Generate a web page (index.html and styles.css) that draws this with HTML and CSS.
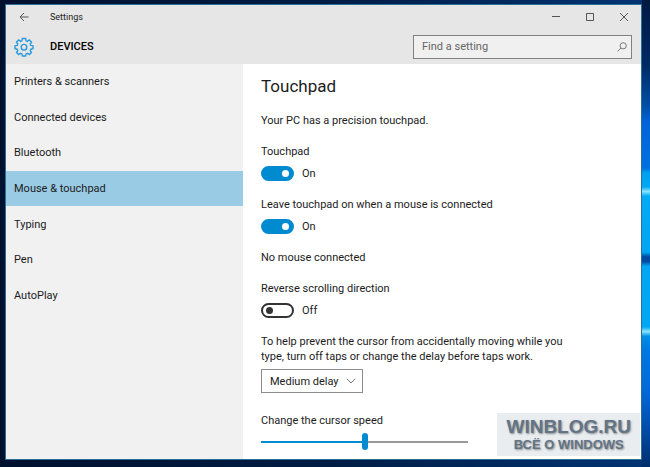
FILE: index.html
```
<!DOCTYPE html>
<html lang="en">

<head>
  <meta charset="UTF-8" />
  <meta name="viewport" content="width=device-width, initial-scale=1.0" />
  <title>Settings</title>
  <link rel="stylesheet" href="styles.css">
</head>

<body>
  <div class="window">
    <header>
      <div class="titlebar">
        <button class="back" aria-label="Back">
          <svg width="10" height="10" viewBox="0 0 10 10"><path d="M9.5 5H1M5 1L1 5l4 4" /></svg>
        </button>
        <span class="app-name">Settings</span>
        <button class="win-btn" aria-label="Minimize">
          <svg width="10" height="10" viewBox="0 0 10 10"><path d="M1 4.5h8" /></svg>
        </button>
        <button class="win-btn" aria-label="Maximize">
          <svg width="10" height="10" viewBox="0 0 10 10"><path d="M1.5 1.5h7v7h-7z" /></svg>
        </button>
        <button class="win-btn" aria-label="Close">
          <svg width="10" height="10" viewBox="0 0 10 10"><path d="M1 1l8 8M9 1L1 9" /></svg>
        </button>
      </div>
      <div class="toolbar">
        <svg class="gear" width="20" height="20" viewBox="0 0 20 20">
          <path d="M8.3 1.5h3.4l.4 2.3 1.3.6 2-1.4 2.1 2.1-1.3 2 .6 1.3 2.2.4v2.8l-2.2.6-.6 1.4 1.3 1.9-2.1 2.1-2-1.3-1.3.6-.5 2.1H8.4l-.5-2.1-1.3-.6-2 1.3-2.1-2.1 1.3-1.9-.6-1.4L1 11.6V8.8l2.2-.4.6-1.3-1.3-2L4.6 3l2 1.4 1.3-.6z" />
          <circle cx="10" cy="10.2" r="2.8" />
        </svg>
        <h2>DEVICES</h2>
        <div class="search">
          <input type="text" placeholder="Find a setting" aria-label="Find a setting">
          <svg width="10" height="10" viewBox="0 0 10 10"><circle cx="6.2" cy="3.8" r="3.1" /><path d="M4 6L.6 9.4" /></svg>
        </div>
      </div>
    </header>

    <div class="content">
      <nav>
        <div class="nav-list">
          <a href="#">Printers &amp; scanners</a>
          <a href="#">Connected devices</a>
          <a href="#">Bluetooth</a>
          <a href="#" class="active">Mouse &amp; touchpad</a>
          <a href="#">Typing</a>
          <a href="#">Pen</a>
          <a href="#">AutoPlay</a>
        </div>
      </nav>

      <main>
        <h1>Touchpad</h1>
        <p>Your PC has a precision touchpad.</p>

        <div class="setting">
          <label for="touchpad">Touchpad</label>
          <div class="switch-row">
            <input type="checkbox" class="switch" id="touchpad" checked>
            <span>On</span>
          </div>
        </div>

        <div class="setting">
          <label for="leaveOn">Leave touchpad on when a mouse is connected</label>
          <div class="switch-row">
            <input type="checkbox" class="switch" id="leaveOn" checked>
            <span>On</span>
          </div>
        </div>

        <p>No mouse connected</p>

        <div class="setting">
          <label for="reverse">Reverse scrolling direction</label>
          <div class="switch-row">
            <input type="checkbox" class="switch" id="reverse">
            <span>Off</span>
          </div>
        </div>

        <div class="setting">
          <label for="delay" class="help">To help prevent the cursor from accidentally moving while you type, turn off taps or change the delay before taps work.</label>
          <div class="dropdown">
            <select id="delay">
              <option>No delay</option>
              <option>Short delay</option>
              <option selected>Medium delay</option>
              <option>Long delay</option>
            </select>
            <svg width="10" height="6" viewBox="0 0 10 6"><path d="M.8.8L5 5 9.2.8" /></svg>
          </div>
        </div>

        <div class="setting speed">
          <label for="speed">Change the cursor speed</label>
          <input type="range" id="speed" min="0" max="100" value="50">
        </div>
      </main>
    </div>

    <div class="watermark">
      <strong>WINBLOG.RU</strong>
      <span>ВСЁ О WINDOWS</span>
    </div>
  </div>
</body>

</html>
```
FILE: styles.css
```
:root {
  --accent: #008bd1;
  --bar: #e6e6e6;
  --side: #f1f1f1;
  --selected: #9acbe4;
  --text: #1c1c1c;
  --line: #8c8c8c;
}

* {
  box-sizing: border-box;
}

/* desktop wallpaper, the bright part shows on the right */
body {
  margin: 0;
  padding: 4px 8px 7px 5px;
  font-family: Roboto, 'Segoe UI', sans-serif;
  font-size: 11px;
  line-height: 15px;
  color: var(--text);
  background:
    linear-gradient(#001a40 0%, #002a66 14%, #0050a8 23%, #0064d8 26%, #0070e0 36%,
      #00a0ee 37%, #00a8f4 40%, #8ae4fa 41%, #00aaf4 42%, #00a6f2 54%, #004aa2 55%, #004aa2 56%,
      #00a6f2 57%, #00a8f4 70%, #8ae4fa 71%, #0090e8 72%, #0078e0 75%, #0068d8 84%, #0048a0 93%, #002e6a 100%) right / 8px 100% no-repeat,
    linear-gradient(90deg, #00102e, #001c44 50%, #003474);
}

.window {
  position: relative;
  display: flex;
  flex-direction: column;
  min-height: calc(100vh - 11px);
  background: #fff;
  border: 1px solid #2a6f98;
}

header {
  background: var(--bar);
}

svg {
  display: block;
  fill: none;
  stroke: #555;
}

button {
  display: flex;
  align-items: center;
  justify-content: center;
  height: 24px;
  padding: 0;
  border: none;
  background: none;
}

.titlebar {
  display: flex;
  align-items: center;
}

.back {
  width: 36px;
}

.app-name {
  flex: 1;
  padding-left: 8px;
  font-size: 9px;
}

.win-btn {
  width: 34px;
}

.toolbar {
  display: flex;
  align-items: center;
  height: 35px;
  padding: 0 9px 0 8px;
}

.gear {
  stroke: #2a9bdc;
  stroke-width: 1.4;
}

h2 {
  flex: 1;
  margin: 0 0 0 16px;
  font-size: 11px;
  font-weight: 500;
  color: #000;
}

.search {
  position: relative;
  width: 36%;
  max-width: 219px;
}

.search input {
  display: block;
  width: 100%;
  height: 24px;
  padding: 0 24px 0 8px;
  border: 1px solid #808080;
  border-radius: 0;
  background: #f0f0f0;
  font: inherit;
}

.search input::placeholder {
  color: #666;
}

.search svg {
  position: absolute;
  right: 5px;
  top: 7px;
  stroke: #777;
}

.content {
  flex: 1;
  display: flex;
}

nav {
  width: 237px;
  background: var(--side);
}

.nav-list {
  display: grid;
  grid-auto-rows: 1fr;
  height: 249px;
}

.nav-list a {
  display: flex;
  align-items: center;
  padding-left: 8px;
  color: var(--text);
  text-decoration: none;
}

.nav-list .active {
  background: var(--selected);
}

main {
  flex: 1;
  display: flex;
  flex-direction: column;
  gap: 16px;
  padding: 11px 18px 8px;
}

h1 {
  margin: 0;
  font-size: 17px;
  font-weight: 400;
  line-height: 22px;
}

p {
  margin: 0;
}

.setting label {
  display: block;
}

.switch-row {
  display: flex;
  align-items: center;
  gap: 8px;
  margin-top: 7px;
}

.switch {
  appearance: none;
  display: flex;
  align-items: center;
  width: 33px;
  height: 15px;
  margin: 0;
  padding: 0 3px;
  border: 2px solid #333;
  border-radius: 8px;
  background: #fff;
}

.switch::before {
  content: "";
  width: 7px;
  height: 7px;
  border-radius: 50%;
  background: #333;
}

.switch:checked {
  justify-content: flex-end;
  border-color: var(--accent);
  background: var(--accent);
}

.switch:checked::before {
  background: #fff;
}

.help {
  max-width: 320px;
}

.dropdown {
  position: relative;
  width: 102px;
  margin-top: 5px;
}

.dropdown select {
  appearance: none;
  display: block;
  width: 100%;
  height: 24px;
  padding: 0 0 0 8px;
  border: 1px solid var(--line);
  border-radius: 0;
  background: #fff;
  font: inherit;
  color: var(--text);
}

.dropdown svg {
  position: absolute;
  right: 7px;
  top: 9px;
  stroke: #777;
  pointer-events: none;
}

.speed {
  margin-top: 4px;
}

.speed input {
  appearance: none;
  display: block;
  width: 207px;
  height: 17px;
  margin: 5px 0 0;
  background: linear-gradient(90deg, var(--accent) 50%, #999 50%) center / 100% 2px no-repeat;
}

.speed input::-webkit-slider-thumb {
  appearance: none;
  width: 6px;
  height: 17px;
  border-radius: 3px;
  background: var(--accent);
}

.watermark {
  position: absolute;
  right: 1px;
  bottom: 3px;
  display: flex;
  flex-direction: column;
  align-items: center;
  padding: 4px 9px;
  background: #e9edf0;
  font-family: 'Liberation Sans', Arial, sans-serif;
  font-weight: bold;
  color: #627487;
  text-shadow: 1px 1px 2px #8a8a8a;
}

.watermark strong {
  font-size: 19px;
  line-height: 20px;
}

.watermark span {
  font-size: 13px;
}
```
